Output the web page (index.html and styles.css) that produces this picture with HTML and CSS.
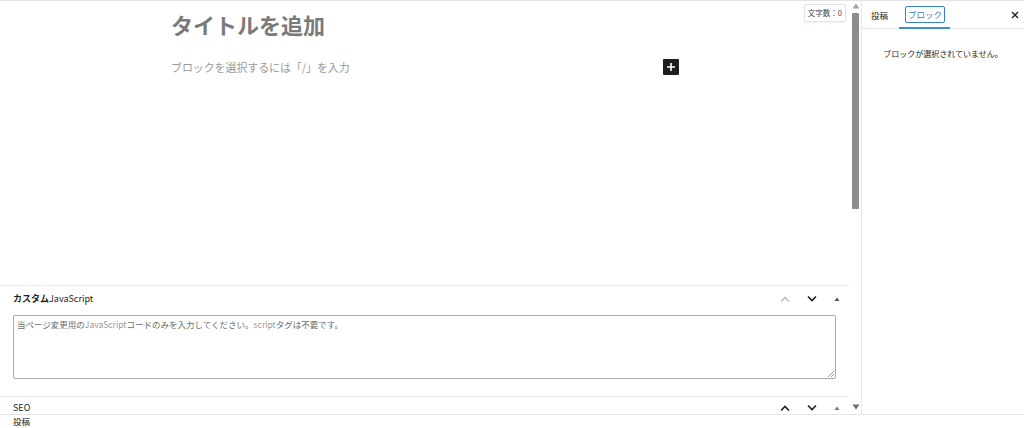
FILE: index.html
```html
<!DOCTYPE html>
<html lang="ja">
<head>
<meta charset="utf-8">
<link rel="stylesheet" href="styles.css">
</head>
<body>
<div class="app">
  <div class="main">
    <div class="editor">
      <div class="canvas">
        <div class="counter">文字数：0</div>
        <h1 class="title">タイトルを追加</h1>
        <div class="block-row">
          <span class="block-ph">ブロックを選択するには「/」を入力</span>
          <span class="inserter"><svg width="10" height="10" viewBox="0 0 10 10"><path d="M5 1v8M1 5h8" stroke="#fff" stroke-width="1.6"/></svg></span>
        </div>
      </div>
      <div class="metabox">
        <div class="mb-head">
          <span class="mb-title"><b>カスタム</b>JavaScript</span>
          <div class="mb-ctrls">
            <svg class="chev light" width="12" height="8" viewBox="0 0 12 8"><path d="M2 6.5L6 2.5l4 4" fill="none" stroke="#b8b8b8" stroke-width="1.3"/></svg>
            <svg class="chev" width="12" height="8" viewBox="0 0 12 8"><path d="M2 1.5l4 4 4-4" fill="none" stroke="#1e1e1e" stroke-width="1.6"/></svg>
            <svg class="tri" width="8" height="6" viewBox="0 0 8 6"><path d="M1.5 5L4 1.5 6.5 5z" fill="#555"/></svg>
          </div>
        </div>
        <div class="mb-body">
          <div class="textarea">当ページ変更用の<span class="alt">JavaScript</span>コードのみを入力してください。<span class="alt">script</span>タグは不要です。<span class="grip"></span></div>
        </div>
      </div>
      <div class="metabox seo">
        <div class="mb-head">
          <span class="mb-title">SEO</span>
          <div class="mb-ctrls">
            <svg class="chev" width="12" height="8" viewBox="0 0 12 8"><path d="M2 6.5L6 2.5l4 4" fill="none" stroke="#1e1e1e" stroke-width="1.6"/></svg>
            <svg class="chev" width="12" height="8" viewBox="0 0 12 8"><path d="M2 1.5l4 4 4-4" fill="none" stroke="#1e1e1e" stroke-width="1.6"/></svg>
            <svg class="tri" width="8" height="6" viewBox="0 0 8 6"><path d="M1.5 5L4 1.5 6.5 5z" fill="#777"/></svg>
          </div>
        </div>
      </div>
    </div>
    <div class="scrollbar">
      <svg class="arrow" width="8" height="6" viewBox="0 0 8 6"><path d="M0.5 5.5L4 0.5 7.5 5.5z" fill="#a3a3a3"/></svg>
      <div class="track"><div class="thumb"></div></div>
      <svg class="arrow" width="8" height="6" viewBox="0 0 8 6"><path d="M0.5 0.5L4 5.5 7.5 0.5z" fill="#6e6e6e"/></svg>
    </div>
    <aside class="sidebar">
      <div class="tabs">
        <span class="tab">投稿</span>
        <span class="tab active"><span class="focus">ブロック</span></span>
        <span class="close"><svg width="8" height="8" viewBox="0 0 8 8"><path d="M1 1l6 6M7 1L1 7" stroke="#1e1e1e" stroke-width="1.4"/></svg></span>
      </div>
      <p class="empty">ブロックが選択されていません。</p>
    </aside>
  </div>
  <footer class="footer">投稿</footer>
</div>
</body>
</html>
```

FILE: styles.css
```css
* { box-sizing: border-box; }
html, body { margin: 0; padding: 0; background: #fff; }
body {
  font-family: "Noto Sans CJK JP", "Noto Sans", sans-serif;
  color: #1e1e1e;
  width: 1024px;
  height: 428px;
  overflow: hidden;
}
.app {
  display: flex;
  flex-direction: column;
  height: 428px;
  border-top: 1px solid #e4e4e4;
}
.main {
  display: flex;
  height: 414px;
  overflow: hidden;
}
.editor {
  width: 849px;
  flex: none;
  display: flex;
  flex-direction: column;
  overflow: hidden;
}
.canvas {
  height: 284px;
  flex: none;
  position: relative;
  padding-left: 171px;
  padding-top: 6px;
}
.counter {
  position: absolute;
  top: 3px;
  right: 3px;
  font-size: 7.5px;
  line-height: 14px;
  padding: 1px 3px;
  border: 1px solid #e2e2e2;
  border-radius: 2px;
  color: #444;
  background: #fff;
  box-shadow: 0 1px 2px rgba(0,0,0,0.05);
}
.title {
  margin: 0;
  font-size: 22px;
  line-height: 34px;
  font-weight: 700;
  color: #7a7a7a;
}
.block-row {
  display: flex;
  align-items: center;
  width: 508px;
  justify-content: space-between;
  margin-top: 17px;
  height: 17px;
}
.block-ph {
  font-size: 11px;
  color: #9a9a9a;
  letter-spacing: -0.1px;
}
.inserter {
  width: 16px;
  height: 16px;
  background: #1e1e1e;
  border-radius: 1px;
  display: flex;
  align-items: center;
  justify-content: center;
}
.metabox {
  border-top: 1px solid #ececec;
  flex: none;
}
.mb-head {
  display: flex;
  align-items: center;
  justify-content: space-between;
  height: 25px;
  padding: 0 8px 0 13px;
}
.mb-title {
  font-size: 9px;
  line-height: 12px;
  color: #1e1e1e;
}
.mb-title b { font-weight: 700; }
.mb-ctrls {
  display: flex;
  align-items: center;
  gap: 15px;
}
.mb-body {
  padding: 4px 13px 17px 13px;
}
.textarea {
  position: relative;
  width: 823px;
  height: 64px;
  border: 1px solid #a7aaad;
  border-radius: 2px;
  font-size: 8.5px;
  line-height: 12px;
  color: #6b6b6b;
  padding: 2px 3px;
}
.textarea .alt { color: #9a9a9a; }
.grip {
  position: absolute;
  right: 1px;
  bottom: 1px;
  width: 6px;
  height: 6px;
  background: linear-gradient(135deg, transparent 45%, #999 45%, #999 55%, transparent 55%, transparent 70%, #999 70%, #999 80%, transparent 80%);
}
.seo .mb-head { height: 16px; margin-top: 3px; }
.scrollbar {
  width: 12px;
  flex: none;
  display: flex;
  flex-direction: column;
  align-items: center;
  padding: 1px 0 2px 1px;
}
.scrollbar .arrow { flex: none; margin: 1px 0 2px; }
.track {
  flex: 1;
  width: 100%;
  display: flex;
  justify-content: center;
}
.thumb {
  width: 7px;
  height: 196px;
  margin-top: 2px;
  background: #8c8c8c;
  border-radius: 1px;
}
.sidebar {
  flex: 1;
  border-left: 1px solid #e8e8e8;
  display: flex;
  flex-direction: column;
}
.tabs {
  display: flex;
  align-items: center;
  height: 28px;
  border-bottom: 1px solid #e4e4e4;
  padding-left: 9px;
  position: relative;
}
.tab {
  font-size: 8.5px;
  color: #1e1e1e;
  height: 27px;
  display: flex;
  align-items: center;
}
.tab.active {
  margin-left: 11px;
  padding: 0 5px 0 6px;
  border-bottom: 2px solid #3f8fd0;
  height: 27px;
  margin-bottom: -1px;
}
.focus {
  border: 1px solid #3582c4;
  border-radius: 2px;
  padding: 1px 2px;
  color: #3582c4;
  line-height: 13px;
}
.close {
  margin-left: auto;
  margin-right: 5px;
  display: flex;
}
.empty {
  margin: 19px 0 0;
  text-align: center;
  font-size: 8px;
  color: #1e1e1e;
}
.footer {
  height: 14px;
  border-top: 1px solid #e4e4e4;
  font-size: 8.5px;
  line-height: 13px;
  padding-left: 13px;
  color: #1e1e1e;
}
```
